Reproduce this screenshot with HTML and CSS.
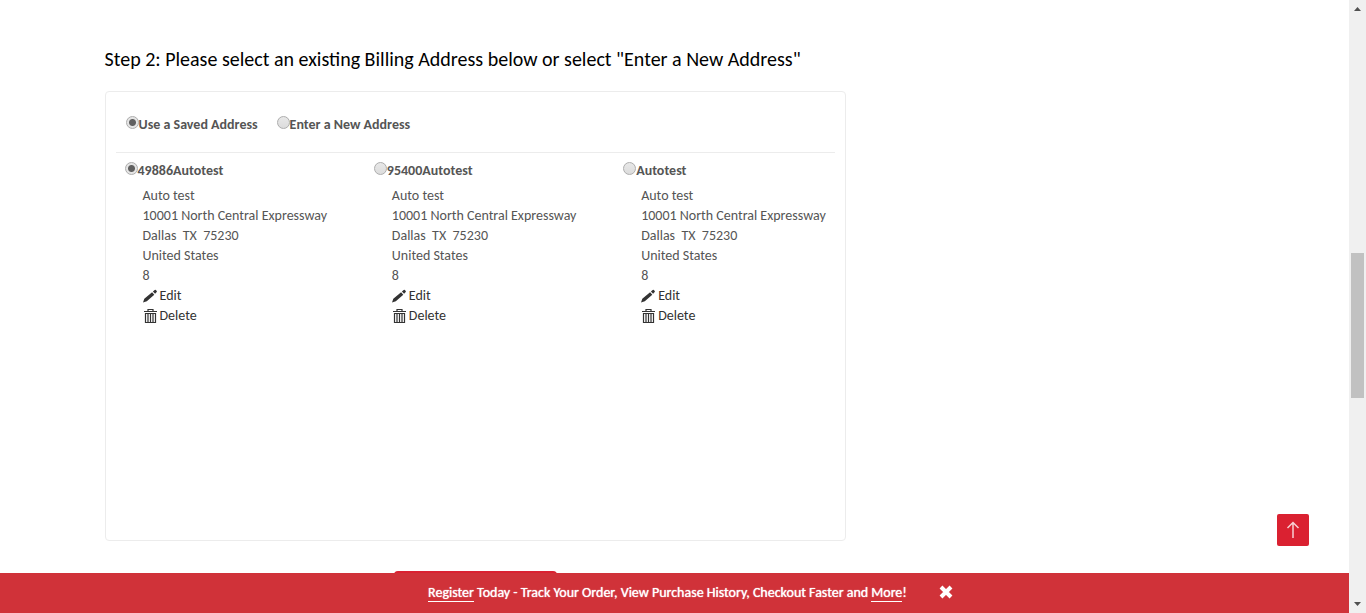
FILE: index.html
```html
<!DOCTYPE html>
<html lang="en">
<head>
<meta charset="utf-8">
<meta name="viewport" content="width=device-width, initial-scale=1">
<title>Billing Address</title>
<link rel="stylesheet" href="styles.css">
</head>
<body>
<svg class="sprite" aria-hidden="true">
  <symbol id="pencil" viewBox="0 0 16 16">
    <path d="M0 14.500l1.300-3.700 7.800-6.500 2.200 2.400-7.500 6.500zM9.900 3.500l1.800-1.500q.7-.5 1.200 0l.8.900q.5.700 0 1.200l-1.600 1.700z"/>
  </symbol>
  <symbol id="trash" viewBox="0 0 16 16">
    <path d="M1 3.500h13M5 3V1.500h5V3M2.500 5.500h10v9h-10zM5 6v8M7.500 6v8M10 6v8" fill="none" stroke="currentColor" stroke-width="1.200"/>
  </symbol>
</svg>
<div class="window">
  <div class="page">
    <main class="container">
      <section class="billing">
        <h1 class="step-title">Step 2: Please select an existing Billing Address below or select "Enter a New Address"</h1>
        <div class="panel">
          <div class="modes">
            <label class="choice"><input class="radio" type="radio" name="mode" checked>Use a Saved Address</label>
            <label class="choice"><input class="radio" type="radio" name="mode">Enter a New Address</label>
          </div>
          <div class="addresses">
            <article class="address">
              <label class="choice"><input class="radio" type="radio" name="address" checked>49886Autotest</label>
              <address class="details">Auto test<br>10001 North Central Expressway<br>Dallas&nbsp; TX&nbsp; 75230<br>United States<br>8</address>
              <a class="action" href="#"><svg class="icon" aria-hidden="true"><use href="#pencil"/></svg>Edit</a>
              <a class="action" href="#"><svg class="icon" aria-hidden="true"><use href="#trash"/></svg>Delete</a>
            </article>
            <article class="address">
              <label class="choice"><input class="radio" type="radio" name="address">95400Autotest</label>
              <address class="details">Auto test<br>10001 North Central Expressway<br>Dallas&nbsp; TX&nbsp; 75230<br>United States<br>8</address>
              <a class="action" href="#"><svg class="icon" aria-hidden="true"><use href="#pencil"/></svg>Edit</a>
              <a class="action" href="#"><svg class="icon" aria-hidden="true"><use href="#trash"/></svg>Delete</a>
            </article>
            <article class="address">
              <label class="choice"><input class="radio" type="radio" name="address">Autotest</label>
              <address class="details">Auto test<br>10001 North Central Expressway<br>Dallas&nbsp; TX&nbsp; 75230<br>United States<br>8</address>
              <a class="action" href="#"><svg class="icon" aria-hidden="true"><use href="#pencil"/></svg>Edit</a>
              <a class="action" href="#"><svg class="icon" aria-hidden="true"><use href="#trash"/></svg>Delete</a>
            </article>
          </div>
        </div>
        <button class="submit" type="button"></button>
      </section>
    </main>
    <button class="to-top" type="button">
      <svg class="arrow" viewBox="0 0 14 18" aria-hidden="true"><path d="M7 17V1.500M1.500 7L7 1.500 12.500 7"/></svg>
    </button>
    <div class="banner">
      <p class="banner-text"><a class="banner-link" href="#">Register</a> Today - Track Your Order, View Purchase History, Checkout Faster and <a class="banner-link" href="#">More</a>!</p>
      <button class="close" type="button">
        <svg class="cross" viewBox="0 0 14 14" aria-hidden="true"><path d="M2 2l10 10M12 2L2 12"/></svg>
      </button>
    </div>
  </div>
  <div class="scrollbar" aria-hidden="true">
    <svg class="scroll-arrow" viewBox="0 0 17 17"><path d="M5 11h7L8.500 7z"/></svg>
    <div class="track"><div class="thumb"></div></div>
    <svg class="scroll-arrow" viewBox="0 0 17 17"><path d="M5 6h7l-3.500 4z"/></svg>
  </div>
</div>
</body>
</html>
```

FILE: styles.css
```css
* { box-sizing: border-box; }

body {
  margin: 0;
  background: #fff;
  color: #555;
  font: 14px/20px Carlito, Lato, sans-serif;
}

button { padding: 0; border: 0; font: inherit; cursor: pointer; }
.sprite { display: none; }

.window { display: flex; height: 100vh; overflow: hidden; }
.page { position: relative; flex: 1; min-width: 0; overflow: hidden; }

.container {
  width: 100%;
  max-width: 1140px;
  margin: 0 auto;
  padding-top: 47px;
}
.billing {
  display: flex;
  flex-direction: column;
  width: 65%;
}
.step-title {
  margin: 0;
  color: #000;
  font-size: 20px;
  font-weight: 400;
  line-height: 24px;
  white-space: nowrap;
}
.panel {
  min-height: 450px;
  margin-top: 20px;
  padding: 23px 10px;
  border: 1px solid #ececec;
  border-radius: 4px;
}

.modes {
  display: flex;
  gap: 19px;
  padding: 0 10px 17px;
  border-bottom: 1px solid #ececec;
}
.choice {
  display: flex;
  align-items: flex-start;
  font-weight: 700;
}
.radio {
  appearance: none;
  flex: none;
  width: 13px;
  height: 13px;
  margin: 1px 0 0;
  border: 1px solid #adadad;
  border-radius: 50%;
  background: linear-gradient(#e8e8e8, #dcdcdc);
}
.radio:checked { background: radial-gradient(circle, #606060 3px, #e5e5e5 4px); }

.addresses {
  display: grid;
  grid-template-columns: repeat(3, 1fr);
  gap: 38px;
  padding: 8px 0 0 9px;
}
.address > .choice { margin-bottom: 5px; }
.details {
  padding-left: 18px;
  font-style: normal;
  white-space: nowrap;
}
.action {
  display: flex;
  gap: 1px;
  align-items: center;
  padding-left: 18px;
  color: #333;
  text-decoration: none;
}
.icon { width: 16px; height: 16px; fill: #333; color: #333; }

.submit {
  align-self: center;
  width: 163px;
  height: 40px;
  margin-top: 30px;
  border-radius: 4px;
  background: #da2131;
}

.to-top {
  position: absolute;
  right: 40px;
  bottom: 67px;
  display: flex;
  align-items: center;
  justify-content: center;
  width: 32px;
  height: 32px;
  border-radius: 2px;
  background: #da2131;
}
.arrow { width: 14px; height: 18px; fill: none; stroke: #f8cfd2; stroke-width: 1.5; }

.banner {
  position: absolute;
  right: 0;
  bottom: 0;
  left: 0;
  display: flex;
  gap: 32px;
  align-items: flex-start;
  justify-content: center;
  height: 40px;
  padding: 10px 0 0 32px;
  background: #d03239;
  color: #fff;
}
.banner-text { margin: 0; text-shadow: 0 0 1px #fff; white-space: nowrap; }
.banner-link {
  border-bottom: 1px solid #fff;
  color: inherit;
  text-decoration: none;
}
.close { display: flex; margin-top: 2px; background: none; }
.cross { width: 14px; height: 14px; fill: none; stroke: #fff; stroke-width: 4; }

.scrollbar {
  display: flex;
  flex: none;
  flex-direction: column;
  width: 17px;
  background: #f0f0f0;
}
.scroll-arrow { width: 17px; height: 17px; fill: #505050; }
.track { flex: 1; display: flex; flex-direction: column; align-items: center; }
.track::before { content: ""; flex: 236; }
.track::after { content: ""; flex: 198; }
.thumb { flex: 145; width: 13px; background: #c1c1c1; }
```
